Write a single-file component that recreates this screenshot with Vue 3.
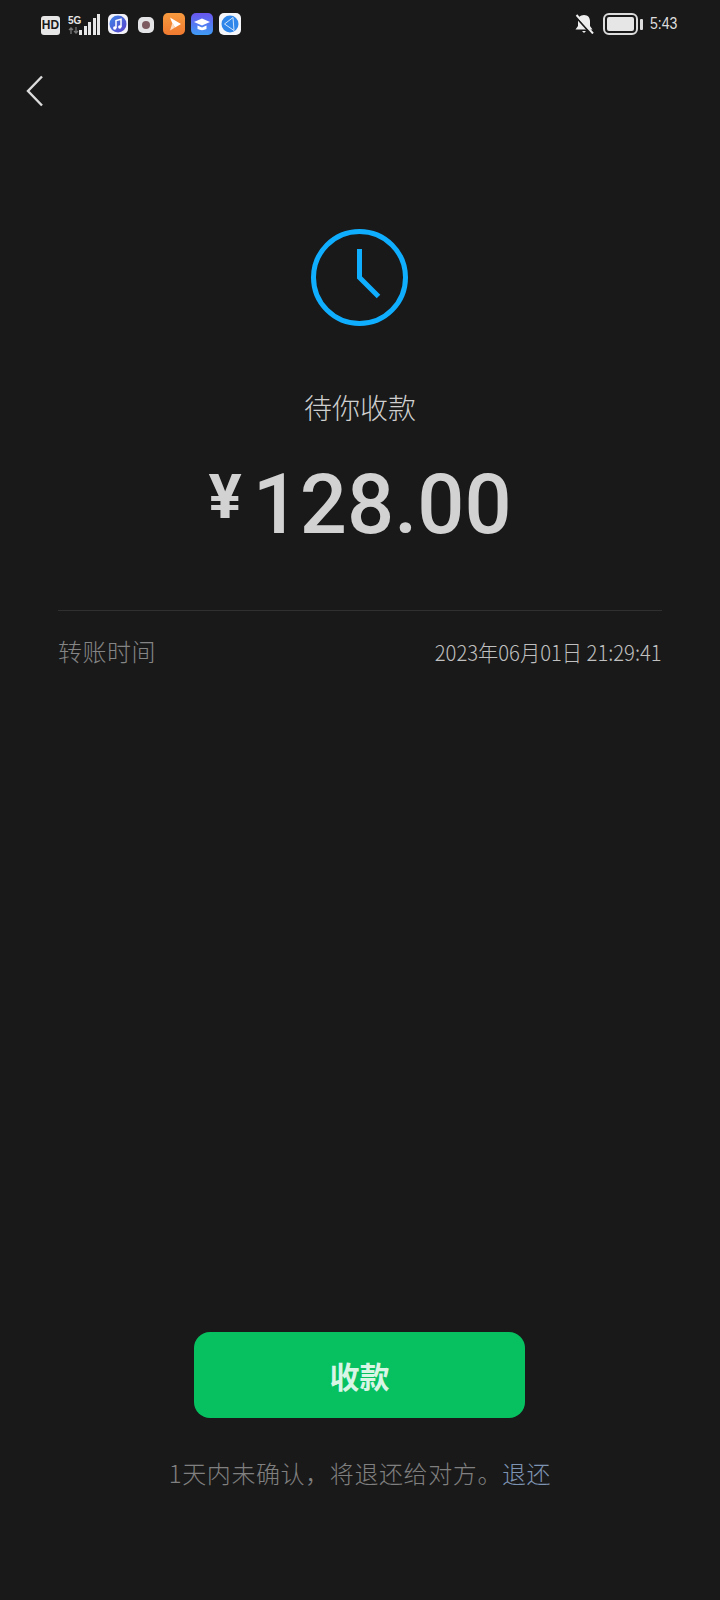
<template>
  <div class="page">
    <div class="status-bar">
      <div class="status-left">
        <span class="hd">HD</span>
        <div class="net">
          <span class="five-g">5G</span>
          <svg class="arrows" width="12" height="7" viewBox="0 0 12 7">
            <path d="M3 7V1M1 3l2-2 2 2M8 0v6M6 4l2 2 2-2" fill="none" stroke="#777" stroke-width="1.3" />
          </svg>
        </div>
        <div class="signal">
          <i v-for="h in bars" :key="h" :style="{ height: h + 'px' }"></i>
        </div>
        <svg class="app app-music" width="20" height="20" viewBox="0 0 20 20">
          <defs>
            <linearGradient id="music" x1="0" y1="0" x2="1" y2="1">
              <stop offset="0" stop-color="#3f86e8" />
              <stop offset="1" stop-color="#5a3fc8" />
            </linearGradient>
          </defs>
          <rect width="20" height="20" rx="5" fill="#f2f2f8" />
          <circle cx="10" cy="10" r="8.500" fill="url(#music)" />
          <path d="M8 14V6.500l5-1.200V13" fill="none" stroke="#fff" stroke-width="1.500" />
          <circle cx="6.800" cy="14" r="1.700" fill="#fff" />
          <circle cx="11.800" cy="13" r="1.700" fill="#fff" />
        </svg>
        <svg class="app app-rec" width="16" height="16" viewBox="0 0 16 16">
          <rect width="16" height="16" rx="5" fill="#e4e4e6" />
          <circle cx="8" cy="8" r="4" fill="#7d5a60" />
        </svg>
        <svg class="app" width="22" height="22" viewBox="0 0 22 22">
          <defs>
            <linearGradient id="orange" x1="0" y1="0" x2="0" y2="1">
              <stop offset="0" stop-color="#f79a3e" />
              <stop offset="1" stop-color="#f07a30" />
            </linearGradient>
          </defs>
          <rect width="22" height="22" rx="5" fill="url(#orange)" />
          <path d="M7 4.500L18 11l-6 3.500-3-5z" fill="#fff" />
          <path d="M7 17.500l2.500-8 2.500 5z" fill="#fcdcc0" />
        </svg>
        <svg class="app app-cap" width="22" height="22" viewBox="0 0 22 22">
          <defs>
            <linearGradient id="cap" x1="0" y1="0" x2="0" y2="1">
              <stop offset="0" stop-color="#6a55ee" />
              <stop offset="1" stop-color="#3f9cf5" />
            </linearGradient>
          </defs>
          <rect width="22" height="22" rx="5" fill="url(#cap)" />
          <path d="M11 5.500l8 3.500-8 3.500L3 9z" fill="#fff" />
          <path d="M6.500 12.500V16c2.500 1.500 6.500 1.500 9 0v-3.500L11 14.500z" fill="#fff" />
        </svg>
        <svg class="app app-globe" width="22" height="22" viewBox="0 0 22 22">
          <rect width="22" height="22" rx="5" fill="#f4f6fa" />
          <circle cx="11" cy="11" r="8.500" fill="#2f86ea" />
          <path d="M5.500 11L14 4.500l1 13z" fill="none" stroke="#cfe3fb" stroke-width="1" />
        </svg>
      </div>
      <div class="status-right">
        <svg width="20" height="20" viewBox="0 0 20 20">
          <path d="M10 1c-4 0-6 2.800-6 6.500V12l-2.500 3.500h17L16 12V7.500C16 3.800 14 1 10 1z" fill="#eee" />
          <path d="M8 17h4l-2 2z" fill="#eee" />
          <path d="M1.200 2.200L17.200 20" stroke="#191919" stroke-width="2" />
          <path d="M2.500 1L19 19.500" stroke="#eee" stroke-width="2" />
        </svg>
        <div class="battery"><span></span></div>
        <i class="battery-nub"></i>
        <span class="clock-text">5:43</span>
      </div>
    </div>

    <div class="nav">
      <svg width="18" height="32" viewBox="0 0 18 32">
        <path d="M16 1.500L2 16l14 14.500" fill="none" stroke="#dcdcdc" stroke-width="2.400" />
      </svg>
    </div>

    <div class="main">
      <svg class="clock" width="97" height="97" viewBox="0 0 97 97">
        <circle cx="48.500" cy="48.500" r="46" fill="none" stroke="#10aeff" stroke-width="5" />
        <path d="M48.500 20v28.500l19 19" fill="none" stroke="#10aeff" stroke-width="5" />
      </svg>
      <div class="title">待你收款</div>
      <div class="amount"><span class="yen">¥</span><span>128.00</span></div>
    </div>

    <div class="detail">
      <span class="label">转账时间</span>
      <span class="value">2023年06月01日 21:29:41</span>
    </div>

    <div class="spacer"></div>

    <div class="footer">
      <button class="receive">收款</button>
      <p class="hint">1天内未确认，将退还给对方。<a>退还</a></p>
    </div>
  </div>
</template>

<script setup>
const bars = [5, 9, 13, 17, 21]
</script>

<style>
html,
body {
  margin: 0;
  background: #191919;
}
</style>

<style scoped>
.page {
  width: 720px;
  height: 1600px;
  display: flex;
  flex-direction: column;
  background: #191919;
  font-family: "Noto Sans CJK SC", "Liberation Sans", sans-serif;
  font-weight: 300;
}

.status-bar {
  height: 48px;
  padding: 0 42px 0 41px;
  display: flex;
  align-items: center;
  justify-content: space-between;
}

.status-left,
.status-right {
  display: flex;
  align-items: center;
}

.hd {
  width: 19px;
  height: 19px;
  margin-top: 2px;
  border-radius: 3px;
  background: #e6e6e6;
  color: #191919;
  font: 700 12px/19px "Liberation Sans", sans-serif;
  text-align: center;
}

.net {
  width: 13px;
  margin-left: 8px;
  display: flex;
  flex-direction: column;
  gap: 1px;
}

.five-g {
  color: #e6e6e6;
  font: 700 10px/11px "Liberation Sans", sans-serif;
}

.signal {
  display: flex;
  align-items: flex-end;
  gap: 1.500px;
  height: 21px;
  margin-left: -2px;
}

.signal i {
  width: 3px;
  background: #e6e6e6;
}

.app {
  flex: none;
}

.app-music {
  margin-left: 8px;
}

.app-rec {
  margin: 1px 9px 0 10px;
}

.app-cap,
.app-globe {
  margin-left: 6px;
}

.status-right svg {
  display: block;
}

.battery {
  width: 35px;
  height: 22px;
  margin-left: 9px;
  box-sizing: border-box;
  padding: 2px;
  border: 2px solid #dcdcdc;
  border-radius: 6px;
}

.battery span {
  display: block;
  height: 100%;
  border-radius: 2px;
  background: #e6e6e6;
}

.battery-nub {
  width: 3px;
  height: 11px;
  margin-left: 2px;
  background: #dcdcdc;
  border-radius: 1px;
}

.clock-text {
  width: 28px;
  margin-left: 7px;
  color: #ddd;
  font: 400 16px/20px "Liberation Sans", sans-serif;
  white-space: nowrap;
  transform: scaleX(0.88);
  transform-origin: left center;
}

.nav {
  height: 32px;
  padding: 27px 0 0 26px;
}

.main {
  display: flex;
  flex-direction: column;
  align-items: center;
  margin-top: 122px;
}

.clock {
  display: block;
  margin-right: 1px;
}

.title {
  margin-top: 61px;
  color: #cfcfcf;
  font-size: 28px;
  line-height: 40px;
}

.amount {
  display: flex;
  align-items: flex-start;
  margin-top: 26px;
  height: 104px;
  color: #d2d2d2;
  font: 500 83px/104px Roboto, "Liberation Sans", sans-serif;
}

.yen {
  margin: 14px 11px 0 0;
  font-size: 62px;
  line-height: 60px;
  font-weight: 700;
}

.detail {
  margin: 53px 58px 0;
  padding-top: 22px;
  border-top: 1px solid #303030;
  display: flex;
  align-items: center;
  justify-content: space-between;
}

.label {
  color: #858585;
  font-size: 24px;
  line-height: 36px;
  letter-spacing: 0.500px;
}

.value {
  color: #c0c0c0;
  font-size: 22px;
  line-height: 36px;
  white-space: nowrap;
  transform: scaleX(0.92);
  transform-origin: right center;
}

.spacer {
  flex: 1;
}

.footer {
  display: flex;
  flex-direction: column;
  align-items: center;
  padding-bottom: 109px;
}

.receive {
  width: 331px;
  height: 86px;
  margin-right: 1px;
  border: 0;
  border-radius: 16px;
  background: #07c160;
  color: #d9f5e6;
  font-family: "Noto Sans CJK SC", sans-serif;
  font-size: 30px;
  font-weight: 700;
}

.hint {
  margin: 37px 0 0;
  color: #808080;
  font-size: 24px;
  line-height: 36px;
  letter-spacing: 0.600px;
}

.hint a {
  color: #7d93b2;
}
</style>
